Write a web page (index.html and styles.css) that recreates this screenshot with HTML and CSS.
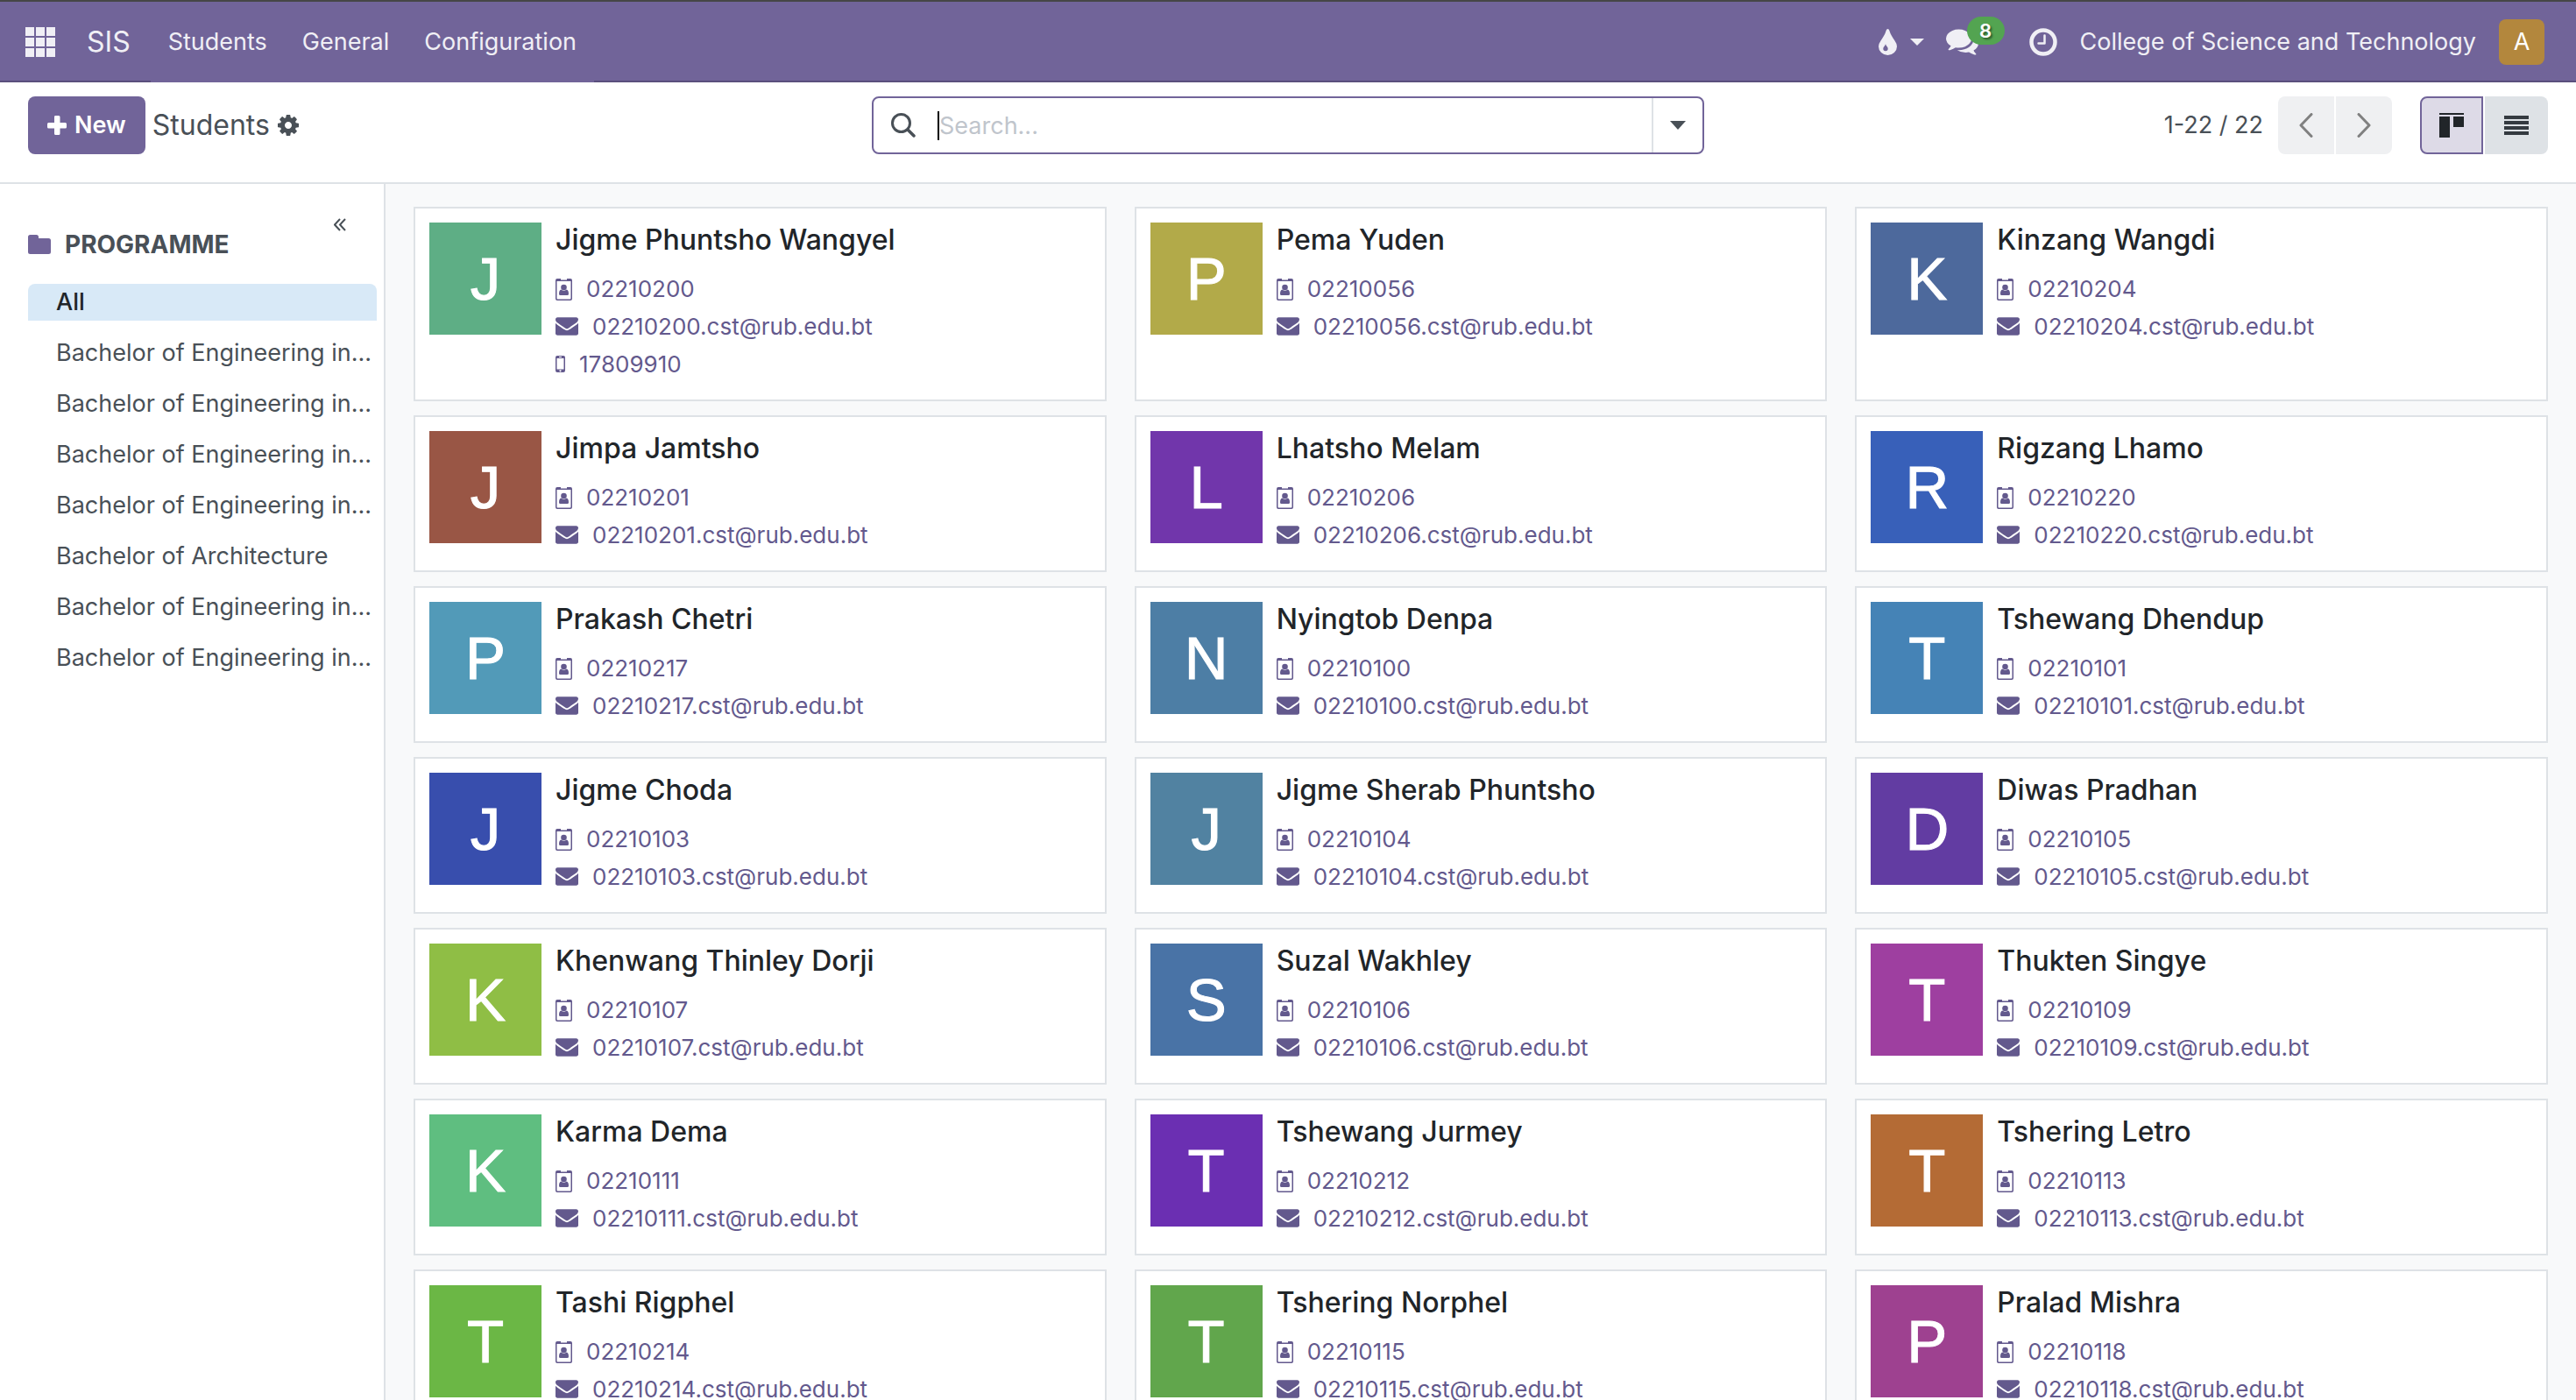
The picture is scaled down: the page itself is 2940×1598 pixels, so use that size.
FILE: index.html
```html
<!DOCTYPE html>
<html lang="en">
<head>
<meta charset="utf-8">
<title>Students</title>
<link rel="stylesheet" href="styles.css">
</head>
<body>
<svg class="sprite" aria-hidden="true">
  <symbol id="mail" viewBox="0 256 1792 1408"><path d="M1792 710v794q0 66-47 113t-113 47h-1472q-66 0-113-47t-47-113v-794q44 49 101 87 362 246 497 345 57 42 92.5 65.5t94.5 48 110 24.5h2q51 0 110-24.5t94.5-48 92.5-65.5q170-123 498-345 57-39 100-87zm0-294q0 79-49 151t-122 123q-376 261-468 325-10 7-42.5 31t-54 38.5-52 32.5-57.5 27-50 9h-2q-23 0-50-9t-57.5-27-52-32.5-54-38.5-42.5-31q-91-64-262-182.5t-205-142.5q-62-42-117-115.5t-55-136.5q0-78 41.5-130t118.5-52h1472q65 0 112.5 47t47.5 113z"/></symbol>
  <symbol id="badge" viewBox="0 0 19 26"><path fill-rule="evenodd" d="M2 1H6V2.500H13V1H17a2 2 0 0 1 2 2V24a2 2 0 0 1-2 2H2a2 2 0 0 1-2-2V3a2 2 0 0 1 2-2ZM1.500 4V23.500a1 1 0 0 0 1 1H16.500a1 1 0 0 0 1-1V4Z"/><circle cx="9.500" cy="11" r="3.300"/><path d="M6.500 13.500Q9.500 16 12.500 13.500Q15 14 15 18.500Q15 20 13.500 20H5.500Q4 20 4 18.500Q4 14 6.500 13.500Z"/></symbol>
  <symbol id="phone" viewBox="0 0 11 19"><path fill-rule="evenodd" d="M2 0H9a2 2 0 0 1 2 2V17a2 2 0 0 1-2 2H2a2 2 0 0 1-2-2V2a2 2 0 0 1 2-2ZM1.500 3V15.500H9.500V3ZM4 1V2H7V1ZM5.500 16.300a1 1 0 1 0 .01 0Z"/></symbol>
</svg>

<header class="navbar">
  <button class="nav-icon apps" aria-label="Apps">
    <svg width="34" height="34" viewBox="0 0 34 34"><path d="M0 0h10v10H0zM12 0h10v10H12zM24 0h10v10H24zM0 12h10v10H0zM12 12h10v10H12zM24 12h10v10H24zM0 24h10v10H0zM12 24h10v10H12zM24 24h10v10H24z"/></svg>
  </button>
  <a class="brand" href="#">SIS</a>
  <nav class="menu">
    <a href="#">Students</a>
    <a href="#">General</a>
    <a href="#">Configuration</a>
  </nav>
  <div class="systray">
    <button class="nav-icon drop" aria-label="Theme">
      <svg width="21" height="30" viewBox="0 0 21 30"><path fill-rule="evenodd" d="M10.500 0Q11.800 0 12.300 1.800C13.800 7 16 9.500 18.500 13.500Q21 17 21 20A10.500 10 0 0 1 0 20Q0 17 2.500 13.500C5 9.500 7.200 7 8.700 1.800Q9.200 0 10.500 0ZM8 17.300C7.500 19.500 5.300 20.500 5.300 22.500A2.700 2.700 0 0 0 10.700 22.500C10.700 20.500 8.500 19.500 8 17.300Z"/></svg>
      <svg width="16" height="8" viewBox="0 0 16 8"><path d="M0 0H16L8 8Z"/></svg>
    </button>
    <button class="nav-icon chat" aria-label="Messages">
      <svg width="37" height="30" viewBox="0 256 1792 1408"><path d="M1408 768q0 139-94 257t-256.500 186.500-353.500 68.500q-86 0-176-16-124 88-278 128-36 9-86 16h-3q-11 0-20.500-8t-11.500-21q-1-3-1-6.500t.5-6.500 2-6l2.500-5 3.500-5.500 4-5 4.500-5 4-4.500q5-6 23-25t26-29.500 22.500-29 25-38.500 20.500-44q-124-72-195-177t-71-224q0-139 94-257t256.500-186.500 353.500-68.500 353.500 68.500 256.500 186.500 94 257zm384 256q0 120-71 224.500t-195 176.500q10 24 20.500 44t25 38.500 22.500 29 26 29.500 23 25q1 1 4 4.500t4.500 5 4 5 3.500 5.500l2.500 5 2 6 .5 6.500-1 6.500q-3 14-13 22t-22 7q-50-7-86-16-154-40-278-128-90 16-176 16-271 0-472-132 58 4 88 4 161 0 309-45t264-129q125-92 192-212t67-254q0-77-23-152 129 71 204 178t75 230z"/></svg>
      <span class="count">8</span>
    </button>
    <button class="nav-icon clock" aria-label="Activities">
      <svg width="32" height="32" viewBox="0 0 32 32"><circle cx="16" cy="16" r="13.500" stroke-width="4.500"/><path d="M17.500 8.500V17.500H10.500" stroke-width="2.500" stroke-linecap="round" stroke-linejoin="round"/></svg>
    </button>
    <a class="company" href="#">College of Science and Technology</a>
    <button class="user" aria-label="User menu">A</button>
  </div>
</header>

<section class="control-panel">
  <div class="breadcrumbs">
    <button class="new"><svg width="22" height="22" viewBox="0 0 22 22"><path d="M9 0H13a1.500 1.500 0 0 1 1.500 1.500V8H20.500A1.500 1.500 0 0 1 22 9.500V13A1.500 1.500 0 0 1 20.500 14.500H14.500V20.500A1.500 1.500 0 0 1 13 22H9.500A1.500 1.500 0 0 1 8 20.500V14.500H1.500A1.500 1.500 0 0 1 0 13V9.500A1.500 1.500 0 0 1 1.500 8H8V1.500A1.500 1.500 0 0 1 9 0Z"/></svg>New</button>
    <h1>Students</h1>
    <button class="cog" aria-label="Actions"><svg width="24" height="24" viewBox="0 128 1536 1536"><path d="M1024 896q0-106-75-181t-181-75-181 75-75 181 75 181 181 75 181-75 75-181zm512-109v222q0 12-8 23t-20 13l-185 28q-19 54-39 91 35 50 107 138 10 12 10 25t-9 23q-27 37-99 108t-94 71q-12 0-26-9l-138-108q-44 23-91 38-16 136-29 186-7 28-36 28h-222q-14 0-24.500-8.500t-11.500-21.500l-28-184q-49-16-90-37l-141 107q-10 9-25 9-14 0-25-11-126-114-165-168-7-10-7-23 0-12 8-23 15-21 51-66.500t54-70.500q-27-50-41-99l-183-27q-13-2-21-12.500t-8-23.500v-222q0-12 8-23t19-13l186-28q14-46 39-92-40-57-107-138-10-12-10-24 0-10 9-23 26-36 98.500-107.500t94.500-71.500q13 0 26 10l138 107q44-23 91-38 16-136 29-186 7-28 36-28h222q14 0 24.500 8.500t11.500 21.500l28 184q49 16 90 37l142-107q9-9 24-9 13 0 25 10 129 119 165 170 7 8 7 22 0 12-8 23-15 21-51 66.500t-54 70.500q26 50 41 98l183 28q13 2 21 12.500t8 23.500z"/></svg></button>
  </div>
  <div class="search">
    <svg class="glass" width="28" height="28" viewBox="0 0 28 28"><circle cx="11.500" cy="11.500" r="10" stroke-width="3"/><path d="M19 19L26 26" stroke-width="3.500"/></svg>
    <span class="caret"></span>
    <input type="text" placeholder="Search..." aria-label="Search">
    <button class="toggle" aria-label="Search options"><svg width="18" height="10" viewBox="0 0 18 10"><path d="M0 0H18L9 10Z"/></svg></button>
  </div>
  <div class="tools">
    <span class="pager">1-22 / 22</span>
    <div class="group">
      <button aria-label="Previous"><svg width="16" height="28" viewBox="0 0 16 28"><path d="M14 1.500L2 14L14 26.500"/></svg></button>
      <button aria-label="Next"><svg width="16" height="28" viewBox="0 0 16 28"><path d="M2 1.500L14 14L2 26.500"/></svg></button>
    </div>
    <div class="group views">
      <button class="active" aria-label="Kanban"><svg width="28" height="28" viewBox="0 0 28 28"><path d="M0 0H28V2H0ZM0 4H12V28H0ZM16 4H28V16H16Z"/></svg></button>
      <button aria-label="List"><svg width="28" height="22" viewBox="0 0 28 22"><path d="M0 0H28V4H0ZM0 6H28V10H0ZM0 12H28V16H0ZM0 18H28V22H0Z"/></svg></button>
    </div>
  </div>
</section>

<div class="content">
  <aside class="sidebar">
    <button class="collapse" aria-label="Collapse"><svg width="14" height="15" viewBox="0 0 14 15"><path d="M7 1L1 7.500L7 14M13 1L7 7.500L13 14"/></svg></button>
    <h2><svg width="26" height="22" viewBox="0 0 26 22"><path d="M2.500 0H9.500Q12 0 12 2.500V4H23.500Q26 4 26 6.500V19.500Q26 22 23.500 22H2.500Q0 22 0 19.500V2.500Q0 0 2.500 0Z"/></svg>PROGRAMME</h2>
    <ul>
      <li><a class="selected" href="#">All</a></li>
      <li><a href="#">Bachelor of Engineering in...</a></li>
      <li><a href="#">Bachelor of Engineering in...</a></li>
      <li><a href="#">Bachelor of Engineering in...</a></li>
      <li><a href="#">Bachelor of Engineering in...</a></li>
      <li><a href="#">Bachelor of Architecture</a></li>
      <li><a href="#">Bachelor of Engineering in...</a></li>
      <li><a href="#">Bachelor of Engineering in...</a></li>
    </ul>
  </aside>
  <main class="kanban">
    <article class="card"><div class="avatar green">J</div><div class="info"><h3>Jigme Phuntsho Wangyel</h3><p><svg class="i-badge"><use href="#badge"/></svg>02210200</p><p><svg class="i-mail"><use href="#mail"/></svg>02210200.cst@rub.edu.bt</p><p><svg class="i-phone"><use href="#phone"/></svg>17809910</p></div></article>
    <article class="card"><div class="avatar olive">P</div><div class="info"><h3>Pema Yuden</h3><p><svg class="i-badge"><use href="#badge"/></svg>02210056</p><p><svg class="i-mail"><use href="#mail"/></svg>02210056.cst@rub.edu.bt</p></div></article>
    <article class="card"><div class="avatar slate">K</div><div class="info"><h3>Kinzang Wangdi</h3><p><svg class="i-badge"><use href="#badge"/></svg>02210204</p><p><svg class="i-mail"><use href="#mail"/></svg>02210204.cst@rub.edu.bt</p></div></article>
    <article class="card"><div class="avatar brick">J</div><div class="info"><h3>Jimpa Jamtsho</h3><p><svg class="i-badge"><use href="#badge"/></svg>02210201</p><p><svg class="i-mail"><use href="#mail"/></svg>02210201.cst@rub.edu.bt</p></div></article>
    <article class="card"><div class="avatar purple">L</div><div class="info"><h3>Lhatsho Melam</h3><p><svg class="i-badge"><use href="#badge"/></svg>02210206</p><p><svg class="i-mail"><use href="#mail"/></svg>02210206.cst@rub.edu.bt</p></div></article>
    <article class="card"><div class="avatar blue">R</div><div class="info"><h3>Rigzang Lhamo</h3><p><svg class="i-badge"><use href="#badge"/></svg>02210220</p><p><svg class="i-mail"><use href="#mail"/></svg>02210220.cst@rub.edu.bt</p></div></article>
    <article class="card"><div class="avatar teal">P</div><div class="info"><h3>Prakash Chetri</h3><p><svg class="i-badge"><use href="#badge"/></svg>02210217</p><p><svg class="i-mail"><use href="#mail"/></svg>02210217.cst@rub.edu.bt</p></div></article>
    <article class="card"><div class="avatar steel">N</div><div class="info"><h3>Nyingtob Denpa</h3><p><svg class="i-badge"><use href="#badge"/></svg>02210100</p><p><svg class="i-mail"><use href="#mail"/></svg>02210100.cst@rub.edu.bt</p></div></article>
    <article class="card"><div class="avatar sky">T</div><div class="info"><h3>Tshewang Dhendup</h3><p><svg class="i-badge"><use href="#badge"/></svg>02210101</p><p><svg class="i-mail"><use href="#mail"/></svg>02210101.cst@rub.edu.bt</p></div></article>
    <article class="card"><div class="avatar indigo">J</div><div class="info"><h3>Jigme Choda</h3><p><svg class="i-badge"><use href="#badge"/></svg>02210103</p><p><svg class="i-mail"><use href="#mail"/></svg>02210103.cst@rub.edu.bt</p></div></article>
    <article class="card"><div class="avatar ocean">J</div><div class="info"><h3>Jigme Sherab Phuntsho</h3><p><svg class="i-badge"><use href="#badge"/></svg>02210104</p><p><svg class="i-mail"><use href="#mail"/></svg>02210104.cst@rub.edu.bt</p></div></article>
    <article class="card"><div class="avatar violet">D</div><div class="info"><h3>Diwas Pradhan</h3><p><svg class="i-badge"><use href="#badge"/></svg>02210105</p><p><svg class="i-mail"><use href="#mail"/></svg>02210105.cst@rub.edu.bt</p></div></article>
    <article class="card"><div class="avatar lime">K</div><div class="info"><h3>Khenwang Thinley Dorji</h3><p><svg class="i-badge"><use href="#badge"/></svg>02210107</p><p><svg class="i-mail"><use href="#mail"/></svg>02210107.cst@rub.edu.bt</p></div></article>
    <article class="card"><div class="avatar denim">S</div><div class="info"><h3>Suzal Wakhley</h3><p><svg class="i-badge"><use href="#badge"/></svg>02210106</p><p><svg class="i-mail"><use href="#mail"/></svg>02210106.cst@rub.edu.bt</p></div></article>
    <article class="card"><div class="avatar orchid">T</div><div class="info"><h3>Thukten Singye</h3><p><svg class="i-badge"><use href="#badge"/></svg>02210109</p><p><svg class="i-mail"><use href="#mail"/></svg>02210109.cst@rub.edu.bt</p></div></article>
    <article class="card"><div class="avatar mint">K</div><div class="info"><h3>Karma Dema</h3><p><svg class="i-badge"><use href="#badge"/></svg>02210111</p><p><svg class="i-mail"><use href="#mail"/></svg>02210111.cst@rub.edu.bt</p></div></article>
    <article class="card"><div class="avatar grape">T</div><div class="info"><h3>Tshewang Jurmey</h3><p><svg class="i-badge"><use href="#badge"/></svg>02210212</p><p><svg class="i-mail"><use href="#mail"/></svg>02210212.cst@rub.edu.bt</p></div></article>
    <article class="card"><div class="avatar copper">T</div><div class="info"><h3>Tshering Letro</h3><p><svg class="i-badge"><use href="#badge"/></svg>02210113</p><p><svg class="i-mail"><use href="#mail"/></svg>02210113.cst@rub.edu.bt</p></div></article>
    <article class="card"><div class="avatar grass">T</div><div class="info"><h3>Tashi Rigphel</h3><p><svg class="i-badge"><use href="#badge"/></svg>02210214</p><p><svg class="i-mail"><use href="#mail"/></svg>02210214.cst@rub.edu.bt</p></div></article>
    <article class="card"><div class="avatar fern">T</div><div class="info"><h3>Tshering Norphel</h3><p><svg class="i-badge"><use href="#badge"/></svg>02210115</p><p><svg class="i-mail"><use href="#mail"/></svg>02210115.cst@rub.edu.bt</p></div></article>
    <article class="card"><div class="avatar plum">P</div><div class="info"><h3>Pralad Mishra</h3><p><svg class="i-badge"><use href="#badge"/></svg>02210118</p><p><svg class="i-mail"><use href="#mail"/></svg>02210118.cst@rub.edu.bt</p></div></article>
  </main>
</div>
</body>
</html>
```
FILE: styles.css
```css
* { box-sizing: border-box; }

body {
  display: flex;
  flex-direction: column;
  height: 100vh;
  margin: 0;
  overflow: hidden;
  background: #fff;
  color: #495057;
  font: 27px/40px Inter, sans-serif;
}

h1, h2, h3, p, ul { margin: 0; padding: 0; }
ul { list-style: none; }
a { color: inherit; text-decoration: none; }
svg { display: block; flex: none; fill: currentColor; }
.sprite { position: absolute; width: 0; height: 0; }

button {
  display: flex;
  align-items: center;
  justify-content: center;
  margin: 0;
  padding: 0;
  border: 0;
  background: none;
  color: inherit;
  font: inherit;
}

/* Top bar */
.navbar {
  display: flex;
  flex: none;
  align-items: stretch;
  height: 94px;
  padding: 0 36px 0 29px;
  border-top: 2px solid #464646;
  background: #716499;
  box-shadow: inset 0 -2px #5a4f7c;
  color: #f0eff5;
}
.brand {
  display: flex;
  align-items: center;
  margin: 0 23px 0 36px;
  font-size: 32px;
}
.menu { display: flex; background: #716499; }
.menu a { display: flex; align-items: center; padding: 0 20px; }
.systray { display: flex; align-items: center; margin-left: auto; }
.drop { gap: 15px; }
.chat { position: relative; margin-left: 25px; }
.count {
  position: absolute;
  left: 24px;
  top: -14px;
  width: 43px;
  height: 32px;
  border-radius: 16px;
  background: #53a451;
  color: #fff;
  font-size: 22px;
  font-weight: 600;
  line-height: 32px;
  text-align: center;
  text-shadow: 2px 2px 2px #2f5f2e;
}
.clock { margin-left: 58px; }
.clock svg { fill: none; stroke: currentColor; }
.company { margin: 0 26px; }
.user {
  width: 52px;
  height: 52px;
  border-radius: 8px;
  background: #b3873d;
  color: #fff;
}

/* Control panel */
.control-panel {
  display: grid;
  flex: none;
  grid-template-columns: 1fr minmax(0, 950px) 1fr;
  padding: 16px 32px 32px;
  border-bottom: 2px solid #dee2e6;
}
.breadcrumbs, .tools { display: flex; align-items: center; }
.new {
  gap: 9px;
  height: 66px;
  padding: 0 22px;
  border-radius: 8px;
  background: #716499;
  color: #fff;
  font-weight: 600;
}
h1 { margin: 0 9px 0 8px; font-size: 32px; font-weight: 400; }
.search {
  display: flex;
  align-items: center;
  height: 66px;
  border: 2px solid #716499;
  border-radius: 8px;
}
.glass { margin: 0 25px 0 20px; fill: none; stroke: #495057; stroke-linecap: round; }
.caret { width: 2px; height: 33px; background: #000; }
.search input {
  flex: 1;
  min-width: 0;
  height: 60px;
  padding: 0;
  border: 0;
  outline: 0;
  background: none;
  color: inherit;
  font: inherit;
}
.search input::placeholder { color: #c0c5cc; opacity: 1; }
.toggle { width: 58px; height: 62px; border-left: 2px solid #dee2e6; }
.tools { justify-content: flex-end; }
.group { display: flex; gap: 2px; margin-left: 17px; }
.group button { width: 64px; height: 66px; background: #eff0f2; }
.group button:first-child { border-radius: 8px 0 0 8px; }
.group button:last-child { border-radius: 0 8px 8px 0; }
.group path { fill: none; stroke: #808080; stroke-width: 3; stroke-linecap: round; stroke-linejoin: round; }
.group.views { margin-left: 32px; }
.views button { width: 72px; background: #dee2e6; color: #343a40; }
.views path { fill: currentColor; stroke: none; }
.views .active { border: 2px solid #716499; background: #dddae7; color: #212529; }

/* Sidebar */
.content { display: flex; flex: 1; min-height: 0; }
.sidebar {
  position: relative;
  flex: none;
  width: 440px;
  padding: 49px 8px 0 32px;
  border-right: 2px solid #dee2e6;
}
.collapse { position: absolute; top: 39px; right: 43px; }
.collapse path { fill: none; stroke: #495057; stroke-width: 2; }
.sidebar h2 {
  display: flex;
  align-items: center;
  gap: 16px;
  margin-bottom: 25px;
  font-size: 28px;
  font-weight: 700;
}
.sidebar h2 svg { color: #716499; }
.sidebar ul { display: flex; flex-direction: column; gap: 16px; }
.sidebar li a {
  display: block;
  padding-left: 32px;
  line-height: 42px;
  white-space: nowrap;
}
.sidebar .selected {
  border-radius: 8px 8px 0 0;
  background: #d8e9f7;
  color: #212529;
  font-weight: 500;
}

/* Student cards */
.kanban {
  display: grid;
  flex: 1;
  grid-template-columns: repeat(3, minmax(0, 1fr));
  gap: 16px 32px;
  align-content: start;
  padding: 26px 32px;
  overflow: hidden;
  background: #f8f9fa;
}
.card {
  display: flex;
  gap: 16px;
  padding: 16px 16px 19px;
  border: 2px solid #dee2e6;
  background: #fff;
}
.avatar {
  flex: none;
  width: 128px;
  height: 128px;
  color: #fff;
  font: 69px/130px "Liberation Sans", sans-serif;
  text-align: center;
  -webkit-text-stroke: 1px #fff;
}
.info h3 {
  margin-bottom: 14px;
  color: #212529;
  font-size: 32px;
  font-weight: 500;
}
.info p {
  display: flex;
  align-items: center;
  gap: 16px;
  color: #63598d;
  font-size: 26px;
  line-height: 43px;
}
.i-badge { width: 19px; height: 26px; }
.i-mail { width: 26px; height: 21px; }
.i-phone { width: 11px; height: 19px; }

.green { background: #5eae85; }
.olive { background: #b2aa49; }
.slate { background: #4d699c; }
.brick { background: #995645; }
.purple { background: #7136ab; }
.blue { background: #3860b9; }
.teal { background: #529ab8; }
.steel { background: #4d7ea5; }
.sky { background: #4583b6; }
.indigo { background: #384ead; }
.ocean { background: #5182a1; }
.violet { background: #623ca2; }
.lime { background: #8fbe45; }
.denim { background: #4973a6; }
.orchid { background: #9e3fa0; }
.mint { background: #5fbe80; }
.grape { background: #6b2fb2; }
.copper { background: #b46b35; }
.grass { background: #6bb745; }
.fern { background: #61a64c; }
.plum { background: #9e4190; }
```
